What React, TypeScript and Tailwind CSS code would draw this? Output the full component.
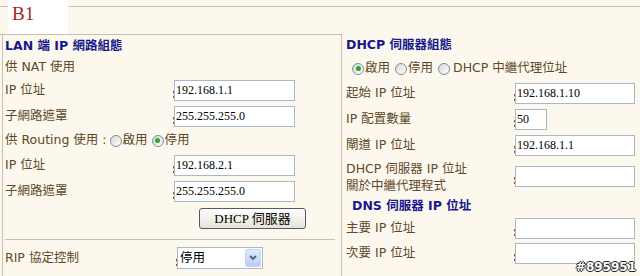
import React from 'react';

const ui = "font-['DejaVu_Sans','Noto_Sans_CJK_TC',sans-serif]";

function Radio({ checked }: { checked?: boolean }) {
  return (
    <span className="mx-[1px] inline-flex h-[12px] w-[12px] shrink-0 items-center justify-center rounded-full border border-[#7590ab] bg-linear-to-br from-[#d9d6cc] to-white">
      {checked && <span className="h-[5px] w-[5px] rounded-full bg-[#31a531]" />}
    </span>
  );
}

function Field({ value = '', w = 'w-[121px]' }: { value?: string; w?: string }) {
  return (
    <div className="flex h-[21px] items-end">
      <span className="mb-[1px] w-[2px] text-[12px] font-bold leading-[12px] text-black">:</span>
      <div
        className={`${w} h-[21px] border border-[#a9b9c9] bg-white pl-[1px] font-['Liberation_Serif',serif] text-[12px] leading-[19px] text-black`}
      >
        {value}
      </div>
    </div>
  );
}

function Row({ label, value, h = 'h-[26px]', w }: { label: React.ReactNode; value?: string; h?: string; w?: string }) {
  return (
    <div className={`flex ${h} items-center`}>
      <div className="w-[167px] shrink-0">{label}</div>
      <Field value={value} w={w} />
    </div>
  );
}

export default function App() {
  return (
    <div className={`relative h-[276px] w-[640px] overflow-hidden bg-[#fcf8ee] text-[12.5px] text-[#5e4829] ${ui}`}>
      {/* header strip */}
      <div className="flex h-[34px]">
        <div className="mt-[6px] w-[8px] border-t border-[#c9c1b0]" />
        <div className="w-[60px] bg-white pl-[4px] pt-[4px] font-['Liberation_Serif',serif] text-[19px] leading-[20px] text-[#a3272b]">
          B1
        </div>
        <div className="mt-[6px] flex-1 border-t border-[#c9c1b0]" />
      </div>

      <div className="flex">
        {/* LAN side */}
        <div className="w-[341px] border-t border-[#c9c1b0]">
          <div className="ml-[2px] h-[242px] border-l border-[#c9c1b0] pl-[2px]">
            <div className="flex h-[23px] items-center font-bold text-[#17188a]">LAN 端 IP 網路組態</div>
            <div className="flex h-[19px] items-center">供 NAT 使用</div>
            <Row label="IP 位址" value="192.168.1.1" />
            <Row label="子網路遮罩" value="255.255.255.0" />
            <div className="flex h-[23px] items-center">
              <span>供 Routing 使用 :</span>
              <span className="w-[2px]" />
              <Radio />
              <span>啟用</span>
              <span className="w-[3px]" />
              <Radio checked />
              <span>停用</span>
            </div>
            <Row label="IP 位址" value="192.168.2.1" />
            <Row label="子網路遮罩" value="255.255.255.0" />
            <div className="flex h-[30px] items-start pt-[4px] pl-[194px]">
              <button className="h-[21px] w-[107px] rounded-[3px] border border-[#4d5a6b] bg-linear-to-b from-white to-[#e6e3d6] font-['Liberation_Serif','Noto_Sans_CJK_TC',serif] text-[13px] leading-[19px] text-black">
                DHCP 伺服器
              </button>
            </div>
            <div className="mr-[6px] mt-[5px] border-t border-[#c9c1b0]" />
            <div className="flex h-[31px] items-center pt-[5px]">
              <div className="w-[170px] shrink-0">RIP 協定控制</div>
              <div className="flex h-[22px] items-end">
                <span className="mb-[1px] w-[2px] text-[12px] font-bold leading-[12px] text-black">:</span>
                <div className="flex h-[22px] w-[86px] items-center border border-[#a9b9c9] bg-white pl-[2px] text-black">
                  <span className="flex-1">停用</span>
                  <span className="mr-[1px] flex h-[18px] w-[16px] items-center justify-center rounded-[2px] border border-[#c3d3f3] bg-linear-to-b from-[#e1eafd] to-[#b9cdf6]">
                    <svg width="8" height="6" viewBox="0 0 8 6">
                      <polyline points="1,1 4,4 7,1" fill="none" stroke="#4d6185" strokeWidth="1.8" />
                    </svg>
                  </span>
                </div>
              </div>
            </div>
          </div>
        </div>

        {/* DHCP side */}
        <div className="h-[242px] flex-1 border-l border-[#c9c1b0] pl-[4px]">
          <div className="flex h-[23px] items-center font-bold text-[#17188a]">DHCP 伺服器組態</div>
          <div className="flex h-[23px] items-center pl-[5px]">
            <Radio checked />
            <span>啟用</span>
            <span className="w-[4px]" />
            <Radio />
            <span>停用</span>
            <span className="w-[4px]" />
            <Radio />
            <span className="ml-[2px]">DHCP 中繼代理位址</span>
          </div>
          <Row label="起始 IP 位址" value="192.168.1.10" w="w-[120px]" />
          <Row label="IP 配置數量" value="50" w="w-[32px]" />
          <Row label="閘道 IP 位址" value="192.168.1.1" w="w-[120px]" />
          <Row
            h="h-[37px]"
            w="w-[120px]"
            label={
              <div className="leading-[17px]">
                <div>DHCP 伺服器 IP 位址</div>
                <div>關於中繼代理程式</div>
              </div>
            }
          />
          <div className="flex h-[22px] items-center pl-[6px] font-bold text-[#17188a]">DNS 伺服器 IP 位址</div>
          <Row label="主要 IP 位址" h="h-[23px]" w="w-[120px]" />
          <Row label="次要 IP 位址" w="w-[120px]" />
        </div>
      </div>

      <div className="absolute bottom-[3px] right-[4px] font-['DejaVu_Sans',sans-serif] text-[12px] font-bold leading-[12px] text-white [text-shadow:-1px_0_#222,1px_0_#222,0_-1px_#222,0_1px_#222]">
        #895951
      </div>
    </div>
  );
}
